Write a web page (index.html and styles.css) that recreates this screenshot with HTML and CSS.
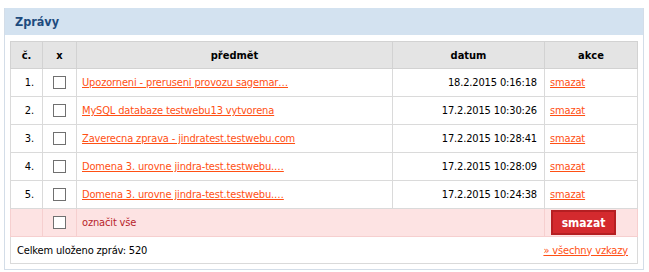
FILE: index.html
```
<!DOCTYPE html>
<html lang="cs">
<head>
    <meta charset="UTF-8">
    <title>Zprávy</title>
    <link rel="stylesheet" href="styles.css">
</head>
<body>
    <div class="panel">
        <h2 class="panel-title">Zprávy</h2>
        <div class="panel-body">
            <table class="messages">
                <thead>
                    <tr>
                        <th class="col-num">č.</th>
                        <th class="col-check">x</th>
                        <th class="col-subject">předmět</th>
                        <th class="col-date">datum</th>
                        <th class="col-action">akce</th>
                    </tr>
                </thead>
                <tbody>
                    <tr>
                        <td class="num">1.</td>
                        <td class="check"><span class="box"></span></td>
                        <td><a href="#">Upozorneni - preruseni provozu sagemar…</a></td>
                        <td class="date">18.2.2015 0:16:18</td>
                        <td><a href="#">smazat</a></td>
                    </tr>
                    <tr>
                        <td class="num">2.</td>
                        <td class="check"><span class="box"></span></td>
                        <td><a href="#">MySQL databaze testwebu13 vytvorena</a></td>
                        <td class="date">17.2.2015 10:30:26</td>
                        <td><a href="#">smazat</a></td>
                    </tr>
                    <tr>
                        <td class="num">3.</td>
                        <td class="check"><span class="box"></span></td>
                        <td><a href="#">Zaverecna zprava - jindratest.testwebu.com</a></td>
                        <td class="date">17.2.2015 10:28:41</td>
                        <td><a href="#">smazat</a></td>
                    </tr>
                    <tr>
                        <td class="num">4.</td>
                        <td class="check"><span class="box"></span></td>
                        <td><a href="#">Domena 3. urovne jindra-test.testwebu.…</a></td>
                        <td class="date">17.2.2015 10:28:09</td>
                        <td><a href="#">smazat</a></td>
                    </tr>
                    <tr>
                        <td class="num">5.</td>
                        <td class="check"><span class="box"></span></td>
                        <td><a href="#">Domena 3. urovne jindra-test.testwebu.…</a></td>
                        <td class="date">17.2.2015 10:24:38</td>
                        <td><a href="#">smazat</a></td>
                    </tr>
                    <tr class="mark-all">
                        <td></td>
                        <td class="check"><span class="box"></span></td>
                        <td colspan="2">označit vše</td>
                        <td class="btn-cell"><button class="btn-delete">smazat</button></td>
                    </tr>
                    <tr class="summary">
                        <td colspan="5">
                            <div class="summary-row">
                                <span>Celkem uloženo zpráv: 520</span>
                                <a href="#">» všechny vzkazy</a>
                            </div>
                        </td>
                    </tr>
                </tbody>
            </table>
        </div>
    </div>
</body>
</html>
```

FILE: styles.css
```
body {
    margin: 0;
    padding: 8px 4px 0 4px;
    font-family: "DejaVu Sans Condensed", "DejaVu Sans", sans-serif;
    font-size: 11px;
    letter-spacing: -0.15px;
    color: #000;
    background: #fff;
}
.panel {
    width: 638px;
    border: 1px solid #d3dde8;
    border-top: none;
}
.panel-title {
    margin: 0;
    height: 27px;
    line-height: 27px;
    padding: 0 10px;
    background-color: #d3e2f0;
    color: #1d4b7e;
    font-size: 12.5px;
    font-weight: bold;
    letter-spacing: 0;
}
.panel-body {
    padding: 6px 5px 5px 5px;
}
.messages {
    width: 628px;
    border-collapse: collapse;
    table-layout: fixed;
}
.messages th,
.messages td {
    border: 1px solid #dadada;
    height: 27px;
    padding: 0 5px;
    white-space: nowrap;
    overflow: hidden;
}
.messages th {
    height: 26px;
    background-color: #e4e4e4;
    border-color: #d2d2d2;
    font-weight: bold;
    font-size: 11px;
    letter-spacing: 0;
    text-align: center;
}
.col-num { width: 21px; }
.col-check { width: 23px; }
.col-subject { width: 305px; }
.col-date { width: 141px; }
.messages td.num {
    text-align: right;
    padding-right: 8px;
}
.messages td.check {
    text-align: center;
}
.box {
    display: inline-block;
    width: 11px;
    height: 11px;
    border: 1px solid #707070;
    background: #fff;
    vertical-align: middle;
}
.messages td.date {
    text-align: right;
    padding-right: 7px;
}
.messages a {
    color: #ff5014;
    text-decoration: underline;
}
.mark-all td {
    background-color: #fde3e3;
    border-color: #f6cfcf;
    color: #b8232a;
}
.mark-all td.btn-cell {
    padding-left: 6px;
}
.btn-delete {
    width: 65px;
    height: 25px;
    background-color: #d42a2e;
    border: 2px solid #b51f22;
    color: #fff;
    font-family: inherit;
    font-size: 12px;
    font-weight: bold;
    letter-spacing: 0;
    padding: 0;
    vertical-align: middle;
}
.summary td {
    height: 26px;
    padding: 0 9px 0 6px;
}
.summary-row {
    display: flex;
    justify-content: space-between;
    align-items: center;
}
```
